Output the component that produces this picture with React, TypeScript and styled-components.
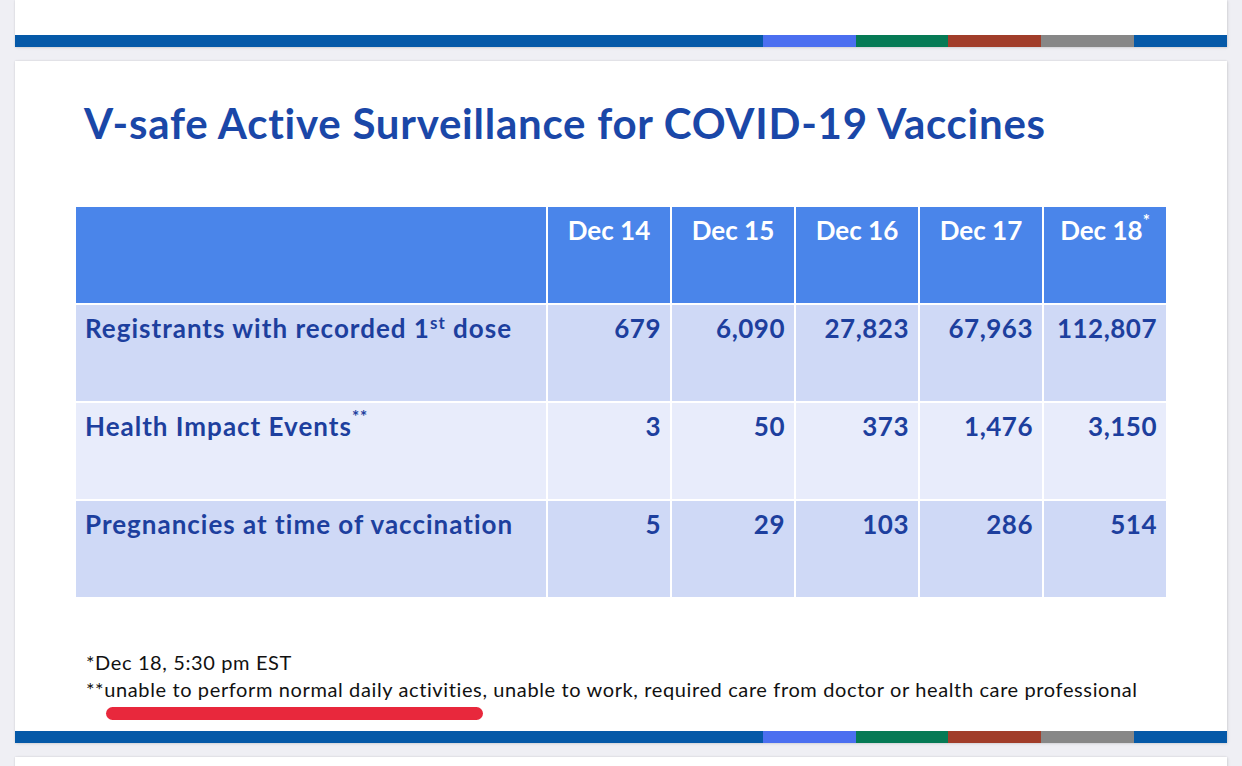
import React from "react";
import styled, { createGlobalStyle } from "styled-components";

const GlobalStyle = createGlobalStyle`
  html, body {
    margin: 0;
    padding: 0;
    background: #efeff4;
    font-family: Lato, "Open Sans", Arial, sans-serif;
  }
`;

const Page = styled.div`
  display: flex;
  flex-direction: column;
  gap: 14px;
  padding: 0 15px;
  height: 766px;
  overflow: hidden;
`;

const Slide = styled.section<{ $height: number }>`
  flex: none;
  height: ${(p) => p.$height}px;
  background: #fff;
  display: flex;
  flex-direction: column;
  box-shadow: 0 0 2px rgba(0, 0, 0, 0.12), 1px 1px 3px rgba(0, 0, 0, 0.08);
`;

const Spacer = styled.div`
  flex: 1;
`;

const Stripe = styled.div`
  flex: none;
  display: flex;
  height: 12px;
`;

const Seg = styled.div<{ $c: string; $w: number; $grow?: boolean }>`
  width: ${(p) => p.$w}px;
  background: ${(p) => p.$c};
  flex: ${(p) => (p.$grow ? "1" : "none")};
`;

const Content = styled.div`
  flex: 1;
  padding: 38px 0 0 61px;
`;

const Title = styled.h1`
  margin: 0 0 0 8px;
  font-size: 42px;
  line-height: 48px;
  font-weight: 700;
  letter-spacing: 0.75px;
  color: #1a47a8;
`;

const Grid = styled.div`
  margin-top: 60px;
  display: grid;
  grid-template-columns: 470px repeat(5, 122px);
  grid-auto-rows: 96px;
  gap: 2px;
  width: 1090px;
`;

const HeadCell = styled.div`
  background: #4a85ea;
  color: #fff;
  font-size: 26px;
  font-weight: 700;
  text-align: center;
  padding-top: 7px;
  line-height: 32px;
`;

const LabelCell = styled.div<{ $shade: string }>`
  background: ${(p) => (p.$shade === "dark" ? "#cfd9f6" : "#e8ecfb")};
  color: #1d3f9e;
  font-size: 26px;
  font-weight: 700;
  letter-spacing: 1px;
  padding: 7px 9px 0;
  line-height: 32px;
`;

const NumCell = styled(LabelCell)`
  text-align: right;
  letter-spacing: 0.5px;
  padding-right: 9px;
`;

const Sup = styled.sup`
  font-size: 17px;
  line-height: 0;
  vertical-align: 9px;
`;

const Star = styled.sup`
  font-size: 17px;
  line-height: 0;
  vertical-align: 13px;
`;

const Notes = styled.div`
  margin: 52px 0 0 10px;
  color: #111;
  font-size: 20px;
  letter-spacing: 0.62px;
  line-height: 27px;

  p {
    margin: 0;
  }
`;

const Underline = styled.div`
  margin: 4px 0 0 20px;
  width: 377px;
  height: 13px;
  border-radius: 7px;
  background: #e8283c;
`;

const dates = ["Dec 14", "Dec 15", "Dec 16", "Dec 17", "Dec 18"];

const StripeBar: React.FC = () => (
  <Stripe>
    <Seg $c="#0559a8" $w={748} $grow />
    <Seg $c="#4b6ff0" $w={93} />
    <Seg $c="#067a55" $w={92} />
    <Seg $c="#a13d2a" $w={93} />
    <Seg $c="#878787" $w={93} />
    <Seg $c="#0559a8" $w={93} />
  </Stripe>
);

const App: React.FC = () => {
  const rows = [
    {
      label: (
        <>
          Registrants with recorded 1<Sup>st</Sup> dose
        </>
      ),
      values: ["679", "6,090", "27,823", "67,963", "112,807"],
      shade: "dark",
    },
    {
      label: (
        <>
          Health Impact Events<Star>**</Star>
        </>
      ),
      values: ["3", "50", "373", "1,476", "3,150"],
      shade: "light",
    },
    {
      label: <>Pregnancies at time of vaccination</>,
      values: ["5", "29", "103", "286", "514"],
      shade: "dark",
    },
  ];

  return (
    <Page>
      <GlobalStyle />
      <Slide $height={47}>
        <Spacer />
        <StripeBar />
      </Slide>

      <Slide $height={682}>
        <Content>
          <Title>V-safe Active Surveillance for COVID-19 Vaccines</Title>
          <Grid>
            <HeadCell />
            {dates.map((d, i) => (
              <HeadCell key={d}>
                {d}
                {i === dates.length - 1 && <Star>*</Star>}
              </HeadCell>
            ))}
            {rows.map((row, r) => (
              <React.Fragment key={r}>
                <LabelCell $shade={row.shade}>{row.label}</LabelCell>
                {row.values.map((v, i) => (
                  <NumCell key={i} $shade={row.shade}>
                    {v}
                  </NumCell>
                ))}
              </React.Fragment>
            ))}
          </Grid>
          <Notes>
            <p>*Dec 18, 5:30 pm EST</p>
            <p>
              **unable to perform normal daily activities, unable to work,
              required care from doctor or health care professional
            </p>
            <Underline />
          </Notes>
        </Content>
        <StripeBar />
      </Slide>

      <Slide $height={20} />
    </Page>
  );
};

export default App;
